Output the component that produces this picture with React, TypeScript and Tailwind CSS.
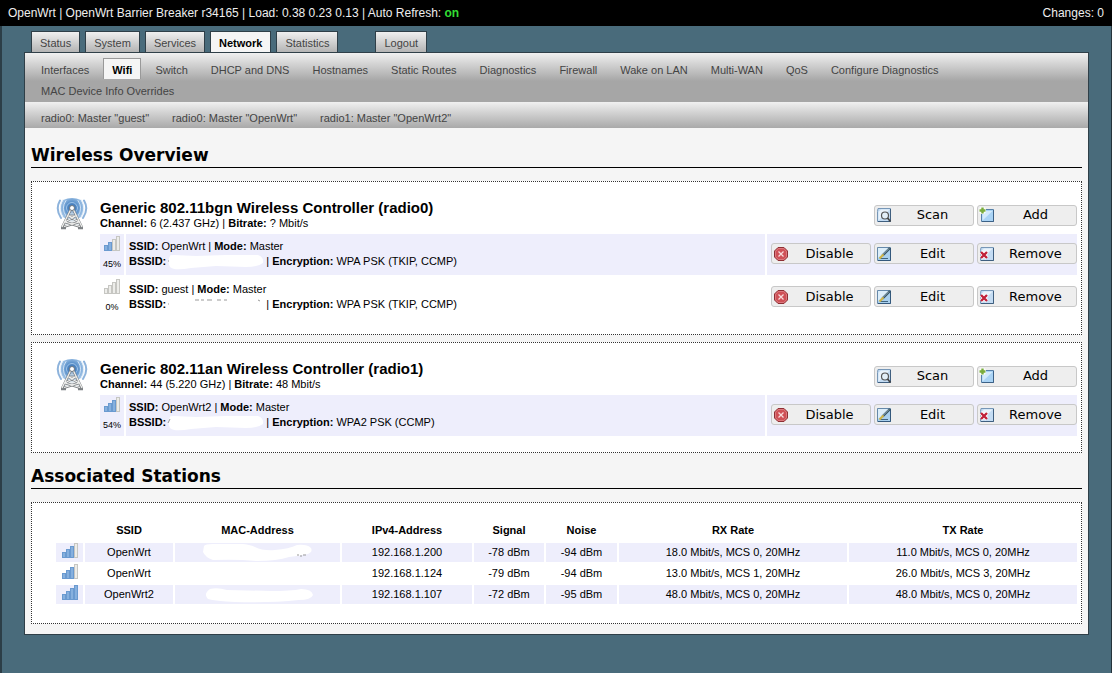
import React from 'react';
import clsx from 'clsx';

interface Network {
  ssid: string;
  encryption: string;
  quality: number;
  bars: number;
  mark: string;
  mask?: string;
}

interface Radio {
  name: string;
  channel: string;
  bitrate: string;
  networks: Network[];
}

interface Station {
  ssid: string;
  ip: string;
  signal: string;
  noise: string;
  rx: string;
  tx: string;
  bars: number;
  mask?: string;
  mark?: string;
}

const mainTabs = ['Status', 'System', 'Services', 'Network', 'Statistics'];

const subTabs = [
  'Interfaces',
  'Wifi',
  'Switch',
  'DHCP and DNS',
  'Hostnames',
  'Static Routes',
  'Diagnostics',
  'Firewall',
  'Wake on LAN',
  'Multi-WAN',
  'QoS',
  'Configure Diagnostics',
  'MAC Device Info Overrides',
];

const radioTabs = ['radio0: Master "guest"', 'radio0: Master "OpenWrt"', 'radio1: Master "OpenWrt2"'];

const hiddenBssid =
  'M4 2 Q3 1 8 1 L30 2 L60 1 L92 1 Q98 3 97 9 Q92 13 80 13 L50 12 L25 14 Q8 17 4 13 Q1 8 4 2Z';

const radios: Radio[] = [
  {
    name: 'Generic 802.11bgn Wireless Controller (radio0)',
    channel: '6 (2.437 GHz)',
    bitrate: '? Mbit/s',
    networks: [
      {
        ssid: 'OpenWrt',
        encryption: 'WPA PSK (TKIP, CCMP)',
        quality: 45,
        bars: 2,
        mark: 'M2 7h1',
        mask: hiddenBssid,
      },
      {
        ssid: 'guest',
        encryption: 'WPA PSK (TKIP, CCMP)',
        quality: 0,
        bars: 0,
        mark: 'M2 7h1M29 3h4M35 3h3M41 3h5M51 3h4M58 3h3M92 3l2 1',
      },
    ],
  },
  {
    name: 'Generic 802.11an Wireless Controller (radio1)',
    channel: '44 (5.220 GHz)',
    bitrate: '48 Mbit/s',
    networks: [
      {
        ssid: 'OpenWrt2',
        encryption: 'WPA2 PSK (CCMP)',
        quality: 54,
        bars: 3,
        mark: 'M2 8L4 4',
        mask: hiddenBssid,
      },
    ],
  },
];

const stations: Station[] = [
  {
    ssid: 'OpenWrt',
    ip: '192.168.1.200',
    signal: '-78 dBm',
    noise: '-94 dBm',
    rx: '18.0 Mbit/s, MCS 0, 20MHz',
    tx: '11.0 Mbit/s, MCS 0, 20MHz',
    bars: 3,
    mask: 'M3 3 Q4 1 12 1 L42 1 Q50 2 54 4 Q62 8 74 7 Q88 6 96 2 Q106 1 110 5 Q112 9 107 11 Q98 13 88 14 Q76 18 56 18 Q36 16 12 17 Q4 14 2 9Z',
    mark: 'M96 12h2M99 13h2M102 12h3',
  },
  {
    ssid: 'OpenWrt',
    ip: '192.168.1.124',
    signal: '-79 dBm',
    noise: '-94 dBm',
    rx: '13.0 Mbit/s, MCS 1, 20MHz',
    tx: '26.0 Mbit/s, MCS 3, 20MHz',
    bars: 3,
  },
  {
    ssid: 'OpenWrt2',
    ip: '192.168.1.107',
    signal: '-72 dBm',
    noise: '-95 dBm',
    rx: '48.0 Mbit/s, MCS 0, 20MHz',
    tx: '48.0 Mbit/s, MCS 0, 20MHz',
    bars: 4,
    mask: 'M9 4 Q16 2 26 5 L70 6 Q90 6 100 4 Q111 4 112 10 Q110 15 98 15 Q70 18 34 17 Q14 16 7 14 Q2 9 9 4Z',
  },
];

const stationHeaders = ['', 'SSID', 'MAC-Address', 'IPv4-Address', 'Signal', 'Noise', 'RX Rate', 'TX Rate'];

function SignalIcon({ bars }: { bars: number }) {
  return (
    <svg width="16" height="16" viewBox="0 0 16 16" className="block" aria-hidden="true">
      {[6, 9, 12, 15].map((h, i) => {
        const on = i < bars;
        return (
          <g key={h}>
            <rect x={i * 4} y={15 - h} width="4" height={h} fill={on ? '#6a9ad0' : '#c6c6c2'} />
            <rect x={i * 4 + 1} y={16 - h} width="2" height={h - 2} fill={on ? '#86b0de' : '#ededea'} />
          </g>
        );
      })}
    </svg>
  );
}

function AntennaIcon() {
  return (
    <svg width="32" height="32" viewBox="0 0 32 32" className="block" aria-hidden="true">
      <defs>
        <radialGradient id="wave" gradientUnits="userSpaceOnUse" cx="16" cy="10" r="12">
          <stop offset="0" stopColor="#2f66a8" />
          <stop offset="0.5" stopColor="#5c92cb" />
          <stop offset="1" stopColor="#a4c6e8" />
        </radialGradient>
      </defs>
      <path d="M7 2Q16 -2 25 2Q30 10 25 19Q16 26 7 19Q2 10 7 2Z" fill="url(#wave)" />
      <g fill="none" strokeLinecap="round">
        <path d="M4 2.500Q-1 11 5 20M28 2.500Q33 11 27 20" stroke="#8db3dc" strokeWidth="2" />
        <path d="M6.500 2Q1.500 11 7 19.500M25.500 2Q30.500 11 25 19.500" stroke="#e4effa" />
        <path d="M10 2.500Q4.500 10 10 18M22 2.500Q27.500 10 22 18" stroke="#cfe2f5" />
        <circle cx="16" cy="10" r="5.500" stroke="#9cc2e8" />
      </g>
      <path d="M16 12L6 29H10L16 26L22 29H26Z" fill="#d5dde2" fillOpacity="0.6" />
      <g fill="none" strokeLinejoin="round">
        <path
          d="M15 11L6 29.500M17 11L26 29.500M12.500 18H19.500L9 24L25 29M19.500 18H12.500L23 24L7 29M5 30h5M22 30h5"
          stroke="#7d8184"
          strokeWidth="2.400"
        />
        <path
          d="M15 11L6 29M17 11L26 29M12.500 18H19.500L9 24L24 28.500M12.500 18L23 24L8 28.500"
          stroke="#f2f2f0"
          strokeWidth="1.200"
        />
      </g>
      <circle cx="16" cy="10" r="2.500" fill="#fff" stroke="#6d7780" />
    </svg>
  );
}

function Page() {
  return (
    <>
      <path d="M2 1.500h12.500v13H1.500V4.500z" fill="#c4dcf3" stroke="#7797b7" />
      <path d="M2.500 13.500V5L5 2.500h8.500z" fill="#eaf3fb" />
      <path d="M14.500 2v12.500H2" fill="none" stroke="#3f5f7f" />
    </>
  );
}

const actionIcons: Record<string, React.ReactNode> = {
  Scan: (
    <>
      <Page />
      <circle cx="9" cy="8.500" r="3.500" fill="#e3eff8" stroke="#555" strokeWidth="1.200" />
      <path d="M11.500 11l3 3.500" stroke="#444" strokeWidth="1.800" />
    </>
  ),
  Add: (
    <>
      <path d="M2.500 2.500h12v12h-12z" fill="#a9d3f5" stroke="#5680a8" />
      <path d="M3.500 13.500V4h10z" fill="#d3eafb" />
      <path d="M14.500 3v11.500H3" fill="none" stroke="#3c6186" />
      <path d="M3.500 0v7M0 3.500h7" stroke="#fff" strokeWidth="4" />
      <path d="M3.500 0.500v6M0.500 3.500h6" stroke="#79ac3c" strokeWidth="2.400" />
    </>
  ),
  Disable: (
    <>
      <path d="M5 1.500h6L14.500 5v6L11 14.500H5L1.500 11V5z" fill="#cf5157" stroke="#8d2f34" />
      <path d="M5.300 2.500h5.400l2.800 2.800v5.400l-2.800 2.800H5.300l-2.800-2.800V5.300z" fill="none" stroke="#e08589" strokeWidth="0.800" />
      <path d="M5.500 5.500l5 5M10.500 5.500l-5 5" stroke="#f8dcdc" strokeWidth="1.300" />
    </>
  ),
  Edit: (
    <>
      <path d="M1.500 1.500h13v13h-13z" fill="#a9d0ee" stroke="#6689aa" />
      <path d="M2 2h11L2 12z" fill="#dceefa" />
      <path d="M14.500 2v12.500H2" fill="none" stroke="#33587c" />
      <path d="M4 12.500h8" stroke="#3f6480" />
      <path d="M14 2L6.500 9.500" stroke="#34505f" strokeWidth="2.400" />
      <path d="M13 2.500L6 9.500" stroke="#9db8c4" />
      <path d="M7.500 8.500L3.500 12.500" stroke="#d0b545" strokeWidth="2" />
    </>
  ),
  Remove: (
    <>
      <Page />
      <path d="M2 6l6 6M8 6l-6 6" stroke="#fff" strokeWidth="4" />
      <path d="M2 6l6 6M8 6l-6 6" stroke="#c0213a" strokeWidth="2.400" />
    </>
  ),
};

function ActionButton({ label }: { label: string }) {
  return (
    <button
      type="button"
      className="flex h-[21px] w-[100px] items-center rounded-[3px] border border-[#c8c8c8] bg-[#eeeeee] pl-px font-['DejaVu_Sans',sans-serif] text-[13px] text-black"
    >
      <svg width="16" height="16" viewBox="0 0 16 16" className="shrink-0" aria-hidden="true">
        {actionIcons[label]}
      </svg>
      <span className="flex-1 text-center">{label}</span>
    </button>
  );
}

function Heading({ children }: { children: React.ReactNode }) {
  return (
    <h2 className="mb-[13px] border-b border-black font-['DejaVu_Sans',sans-serif] text-[17px] leading-6 font-bold text-black">
      {children}
    </h2>
  );
}

function RadioSection({ radio }: { radio: Radio }) {
  return (
    <section className="flex gap-3 border border-dotted border-[#333333] bg-white py-4 pr-1 pl-6">
      <AntennaIcon />
      <div className="flex flex-1 flex-col gap-[2px]">
        <div className="flex h-[34px] items-center justify-between">
          <div>
            <h3 className="text-[15px] leading-4 font-bold text-black">{radio.name}</h3>
            <p className="leading-[15px]">
              <b>Channel:</b> {radio.channel} | <b>Bitrate:</b> {radio.bitrate}
            </p>
          </div>
          <div className="flex gap-[3px]">
            <ActionButton label="Scan" />
            <ActionButton label="Add" />
          </div>
        </div>
        {radio.networks.map((net, i) => {
          const shade = i % 2 === 0 ? 'bg-[#eeeefc]' : 'bg-white';
          return (
            <div key={net.ssid} className="flex h-[41px] gap-[2px]">
              <div className={clsx('flex w-6 flex-col items-center pt-[2px] text-[9px]', shade)}>
                <SignalIcon bars={net.bars} />
                <span className="pt-[5px] leading-[15px]">{net.quality}%</span>
              </div>
              <div className={clsx('flex-1 px-[3px] pt-[5px] leading-[15px]', shade)}>
                <p>
                  <b>SSID:</b> {net.ssid} | <b>Mode:</b> Master
                </p>
                <p className="flex">
                  <b>BSSID:</b>
                  <svg width="100" height="17" viewBox="0 0 100 17" className="-mb-[2px]" aria-hidden="true">
                    {net.mask && <path d={net.mask} fill="#fff" />}
                    <path d={net.mark} stroke="#999" strokeWidth="1" />
                  </svg>
                  <span>
                    | <b>Encryption:</b> {net.encryption}
                  </span>
                </p>
              </div>
              <div className={clsx('flex items-start gap-[3px] pt-[9px] pl-1', shade)}>
                <ActionButton label="Disable" />
                <ActionButton label="Edit" />
                <ActionButton label="Remove" />
              </div>
            </div>
          );
        })}
      </div>
    </section>
  );
}

function StationTable() {
  return (
    <table className="w-full table-fixed border-separate border-spacing-[2px] text-center">
      <colgroup>
        <col className="w-[27px]" />
        <col className="w-[88px]" />
        <col className="w-[165px]" />
        <col className="w-[130px]" />
        <col className="w-[70px]" />
        <col className="w-[71px]" />
        <col />
        <col />
      </colgroup>
      <thead>
        <tr>
          {stationHeaders.map((header) => (
            <th key={header} className="h-[21px] p-0 leading-[15px] font-bold">
              {header}
            </th>
          ))}
        </tr>
      </thead>
      <tbody>
        {stations.map((s) => (
          <tr key={s.ip} className="odd:bg-[#eeeefc]">
            <td className="h-[19px] p-0 align-top">
              <div className="flex justify-center">
                <SignalIcon bars={s.bars} />
              </div>
            </td>
            <td className="p-0">{s.ssid}</td>
            <td className="p-0">
              {s.mask && (
                <svg width="114" height="19" viewBox="0 0 114 19" className="mx-auto block" aria-hidden="true">
                  <path d={s.mask} fill="#fff" />
                  {s.mark && <path d={s.mark} stroke="#999" />}
                </svg>
              )}
            </td>
            <td className="p-0">{s.ip}</td>
            <td className="p-0">{s.signal}</td>
            <td className="p-0">{s.noise}</td>
            <td className="p-0">{s.rx}</td>
            <td className="p-0">{s.tx}</td>
          </tr>
        ))}
      </tbody>
    </table>
  );
}

export default function App() {
  return (
    <div className="min-h-screen bg-[#496b7b] font-['Liberation_Sans',Arial,sans-serif] text-[11px] text-black">
      <header className="flex h-[26px] items-center justify-between bg-black px-2 text-[12px] text-[#eeeeee]">
        <p>
          OpenWrt | OpenWrt Barrier Breaker r34165 | Load: 0.38 0.23 0.13 | Auto Refresh:{' '}
          <a href="#refresh" className="font-bold text-[#33dd33]">
            on
          </a>
        </p>
        <a href="#changes">Changes: 0</a>
      </header>

      <div className="min-h-[calc(100vh-26px)] border-r border-l-2 border-r-[#26343b] border-l-[#2c3e47] pt-[5px] pr-[22px] pl-[22px]">
        <nav className="flex gap-[5px] pl-[7px]">
          {[...mainTabs, 'Logout'].map((tab) => (
            <a
              key={tab}
              href={`#${tab}`}
              className={clsx(
                'h-[21px] border border-b-0 border-[#2f3f48] px-2 pt-[4px] leading-[15px]',
                tab === 'Network'
                  ? 'bg-[#f5f5f5] font-bold text-black'
                  : 'bg-linear-to-b from-[#f0f0f0] to-[#b4b4b4] text-[#444444]',
                tab === 'Logout' && 'ml-8'
              )}
            >
              {tab}
            </a>
          ))}
        </nav>

        <main className="border border-[#2f3f48] bg-[#f5f5f5]">
          <nav className="flex flex-wrap gap-x-px bg-[#a6a6a6] bg-[linear-gradient(to_bottom,#f0f0f0,#a6a6a6_28px)] px-[5px] pt-[5px] pb-[2px]">
            {subTabs.map((tab) => (
              <a
                key={tab}
                href={`#${tab}`}
                className={clsx(
                  'mx-[2px] h-[21px] border border-b-0 px-2 pt-[4px] leading-[15px]',
                  tab === 'Wifi'
                    ? 'border-[#999999] bg-[#f5f5f5] font-bold text-black'
                    : 'border-transparent text-[#444444]'
                )}
              >
                {tab}
              </a>
            ))}
          </nav>
          <nav className="flex h-[26px] gap-px bg-linear-to-b from-[#f0f0f0] to-[#a9a9a9] px-[5px] pt-[9px] text-[#444444]">
            {radioTabs.map((tab) => (
              <a key={tab} href={`#${tab}`} className="px-[11px] leading-[15px]">
                {tab}
              </a>
            ))}
          </nav>

          <div className="px-[6px] pt-[15px] pb-[10px]">
            <Heading>Wireless Overview</Heading>
            <div className="mb-[11px] flex flex-col gap-[7px]">
              {radios.map((radio) => (
                <RadioSection key={radio.name} radio={radio} />
              ))}
            </div>
            <Heading>Associated Stations</Heading>
            <section className="border border-dotted border-[#333333] bg-white pt-[15px] pr-[2px] pb-[17px] pl-[22px]">
              <StationTable />
            </section>
          </div>
        </main>
      </div>
    </div>
  );
}
